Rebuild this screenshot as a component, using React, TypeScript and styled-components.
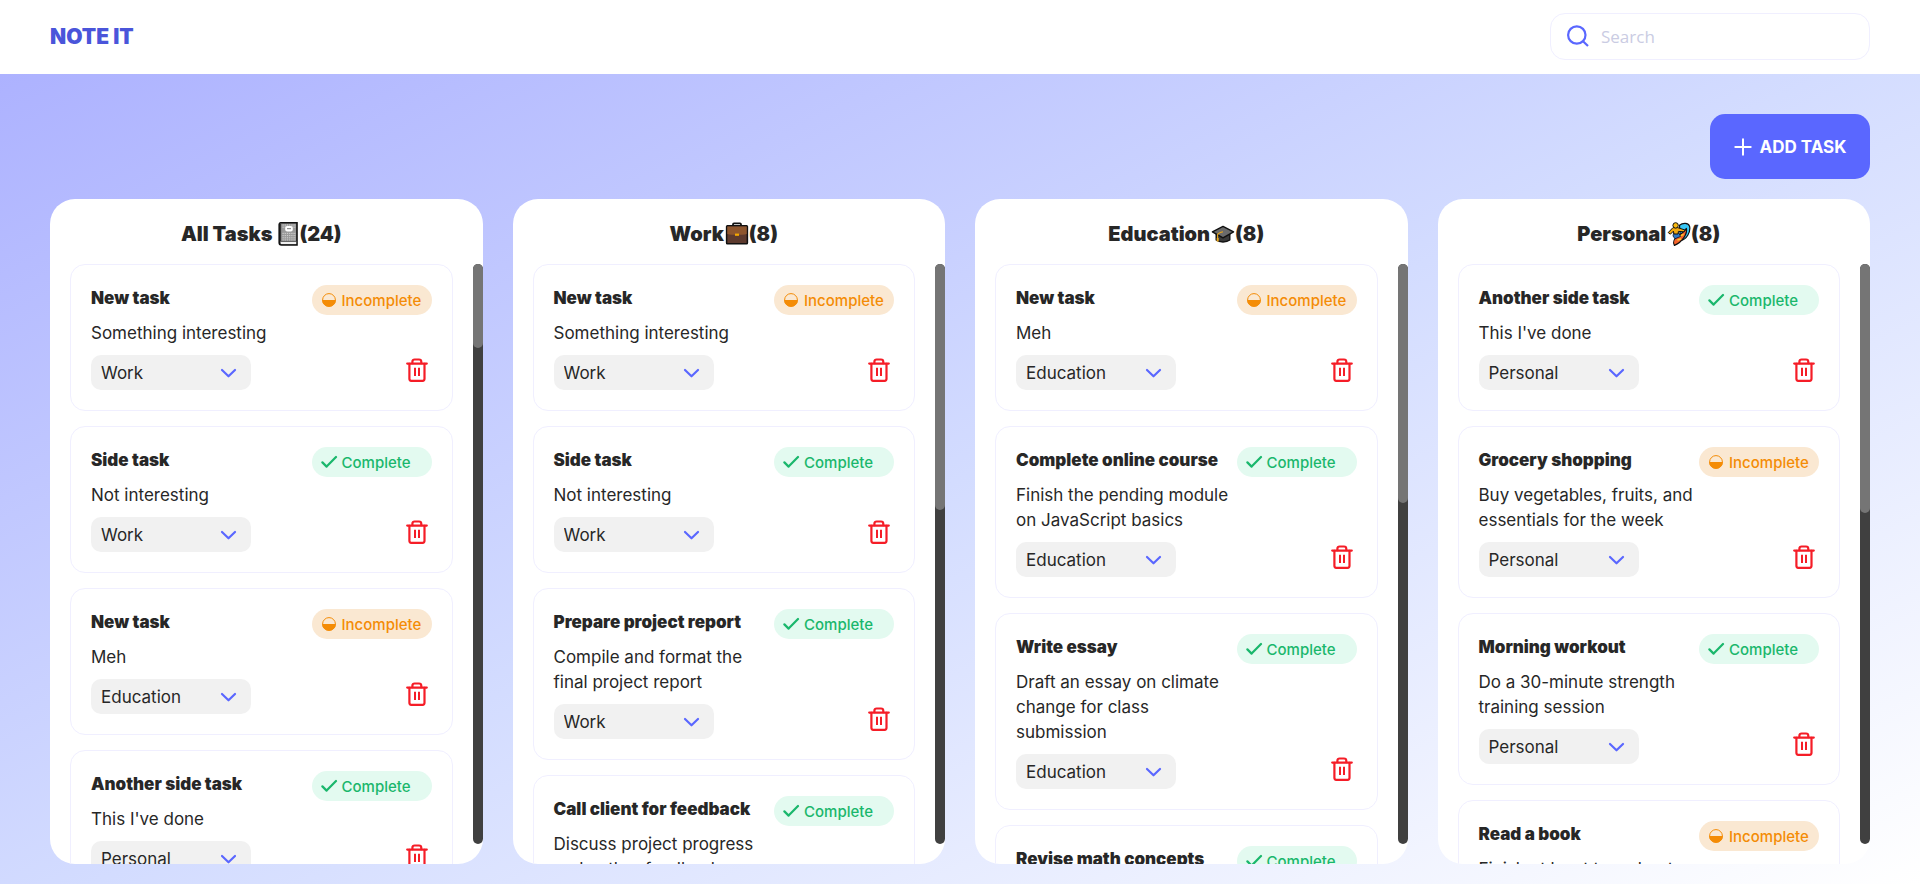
import React, { useState } from "react";
import styled, { createGlobalStyle } from "styled-components";

type Category = "Work" | "Education" | "Personal";

interface Task {
  title: string;
  text: string;
  category: Category;
  done: boolean;
}

interface Board {
  name: string;
  count: number;
  spaced?: boolean;
  icon: React.ReactNode;
  thumb: number;
  tasks: Task[];
}

const GlobalStyle = createGlobalStyle`
  *, *::before, *::after { box-sizing: border-box; }
  body {
    margin: 0;
    font-family: Inter, "Open Sans", sans-serif;
    color: #272727;
  }
`;

const Page = styled.div`
  display: flex;
  flex-direction: column;
  height: 100vh;
`;

const Header = styled.header`
  display: flex;
  align-items: center;
  justify-content: space-between;
  padding: 13px 50px 14px;
  background: #fff;
`;

const Logo = styled.a`
  font-size: 21px;
  line-height: 24px;
  font-weight: 900;
  color: #4a55da;
  text-decoration: none;
`;

const SearchBox = styled.label`
  display: flex;
  align-items: center;
  gap: 11px;
  width: 320px;
  height: 47px;
  padding: 0 15px;
  border: 1px solid #f0efff;
  border-radius: 15px;
`;

const SearchInput = styled.input`
  flex: 1;
  min-width: 0;
  border: 0;
  outline: 0;
  padding: 0;
  background: transparent;
  font-family: "Open Sans", sans-serif;
  font-size: 17px;
  font-weight: 400;
  color: #272727;
  &::placeholder {
    color: #cacce3;
    opacity: 1;
  }
`;

const Main = styled.main`
  flex: 1;
  min-height: 0;
  display: flex;
  flex-direction: column;
  gap: 20px;
  padding: 40px 50px 20px;
  background: linear-gradient(155deg, #adb2ff 0%, #d3dcff 50%, #ffffff 100%);
`;

const AddButton = styled.button`
  align-self: flex-end;
  display: flex;
  align-items: center;
  justify-content: center;
  gap: 6px;
  width: 160px;
  height: 65px;
  flex: none;
  border: 0;
  border-radius: 15px;
  background: #5a67ff;
  color: #fff;
  font-family: inherit;
  font-size: 17px;
  font-weight: 700;
  cursor: pointer;
`;

const Boards = styled.div`
  flex: 1;
  min-height: 0;
  display: grid;
  grid-template-columns: repeat(4, minmax(0, 1fr));
  grid-template-rows: minmax(0, 1fr);
  gap: 30px;
`;

const Column = styled.section`
  display: flex;
  flex-direction: column;
  border-radius: 25px;
  background: #fff;
  overflow: hidden;
`;

const ColumnTitle = styled.h2`
  display: flex;
  align-items: center;
  justify-content: center;
  height: 65px;
  flex: none;
  margin: 0;
  padding: 5px 10px 0 0;
  font-size: 20px;
  font-weight: 900;
  white-space: pre;
`;

const ScrollRow = styled.div`
  flex: 1;
  min-height: 0;
  display: flex;
`;

const CardList = styled.ul`
  flex: 1;
  min-width: 0;
  display: flex;
  flex-direction: column;
  gap: 15px;
  margin: 0;
  padding: 0 20px;
  list-style: none;
  overflow-y: auto;
  scrollbar-width: none;
`;

const ScrollTrack = styled.div`
  flex: none;
  width: 10px;
  margin-bottom: 20px;
  border-radius: 5px;
  background: #404040;
`;

const ScrollThumb = styled.div<{ $share: number }>`
  height: ${(p) => p.$share}%;
  border-radius: 5px;
  background: #757575;
`;

const Card = styled.li`
  flex: none;
  display: flex;
  flex-direction: column;
  gap: 9px;
  padding: 20px;
  border: 1px solid #f0efff;
  border-radius: 15px;
`;

const CardTop = styled.div`
  display: flex;
  align-items: flex-start;
  justify-content: space-between;
`;

const CardText = styled.div`
  flex: 1;
  min-width: 0;
  display: flex;
  flex-direction: column;
  gap: 10px;
  padding-top: 1px;
`;

const CardTitle = styled.h3`
  margin: 0;
  font-size: 17px;
  line-height: 25px;
  font-weight: 900;
`;

const CardBody = styled.p`
  margin: 0;
  font-size: 17px;
  line-height: 25px;
  font-weight: 400;
`;

const Badge = styled.button<{ $done: boolean }>`
  flex: none;
  display: flex;
  align-items: center;
  gap: 4px;
  width: 120px;
  height: 30px;
  padding: 0 0 0 9px;
  border: 0;
  border-radius: 15px;
  background: ${(p) => (p.$done ? "#e3faf0" : "#fae8d2")};
  color: ${(p) => (p.$done ? "#1ab76c" : "#f48c06")};
  font-family: inherit;
  font-size: 15px;
  font-weight: 500;
  cursor: pointer;
`;

const CardFoot = styled.div`
  display: flex;
  align-items: flex-start;
  justify-content: space-between;
`;

const Picker = styled.div`
  display: grid;
  grid-template-areas: "field";
  align-items: center;
  width: 160px;
  svg {
    grid-area: field;
    justify-self: end;
    margin-right: 13px;
    pointer-events: none;
  }
`;

const Select = styled.select`
  grid-area: field;
  appearance: none;
  width: 100%;
  height: 35px;
  padding: 0 10px;
  border: 0;
  border-radius: 10px;
  background: #f1f1f1;
  color: #272727;
  font-family: inherit;
  font-size: 17px;
  font-weight: 400;
`;

const DeleteButton = styled.button`
  display: flex;
  align-items: center;
  justify-content: center;
  width: 30px;
  height: 30px;
  padding: 0;
  border: 0;
  background: transparent;
  cursor: pointer;
`;

const SearchIcon = () => (
  <svg width="24" height="24" viewBox="0 0 24 24" fill="none" stroke="#5a67ff" strokeWidth="2.2" aria-hidden="true">
    <circle cx="10.8" cy="10" r="8.7" />
    <path d="M17 16.2 L22 21" />
  </svg>
);

const PlusIcon = () => (
  <svg width="20" height="20" viewBox="0 0 20 20" fill="none" stroke="#fff" strokeWidth="2" strokeLinecap="round" aria-hidden="true">
    <path d="M9 2.3v15.4M1.3 10h15.4" />
  </svg>
);

const HalfIcon = () => (
  <svg width="17" height="16" viewBox="0 0 17 16" aria-hidden="true">
    <circle cx="8" cy="8" r="6.4" fill="none" stroke="#f48c06" strokeWidth="1" />
    <path d="M1.2 8 H14.8 A6.8 6.8 0 0 1 1.2 8Z" fill="#f48c06" />
  </svg>
);

const CheckIcon = () => (
  <svg width="17" height="16" viewBox="0 0 17 16" fill="none" stroke="#1ab76c" strokeWidth="2.2" strokeLinecap="round" strokeLinejoin="round" aria-hidden="true">
    <path d="M1.4 8.4 L5.6 12.6 L15 3" />
  </svg>
);

const ChevronIcon = () => (
  <svg width="18" height="12" viewBox="0 0 18 12" fill="none" stroke="#5a67ff" strokeWidth="2.2" strokeLinecap="round" strokeLinejoin="round" aria-hidden="true">
    <path d="M2 3 L8.5 9.3 L15 3" />
  </svg>
);

const TrashIcon = () => (
  <svg width="30" height="30" viewBox="0 0 30 30" fill="none" stroke="#f51d27" strokeWidth="2.2" strokeLinecap="round" strokeLinejoin="round" aria-hidden="true">
    <path d="M5.2 8.6 H24.8" />
    <path d="M10.4 8.2 V6.8 C10.4 5.4 11.3 4.5 12.6 4.5 H17 C18.4 4.5 19.3 5.4 19.3 6.8 V8.2" />
    <path d="M7.4 8.8 V23.8 C7.4 25 8.1 25.8 9.2 25.8 H20.6 C21.8 25.8 22.5 25 22.5 23.8 V8.8" />
    <path d="M13 12.8 V21 M17 12.8 V21" strokeLinecap="butt" strokeWidth="2" />
  </svg>
);

const NotebookIcon = () => (
  <svg width="23" height="26" viewBox="1 0 23 26" aria-hidden="true">
    <path d="M5.5 1.8 H22 V24 H6.5 C4.8 24 4.2 23 4.2 21.5 V3.5 C4.2 2.4 4.6 1.8 5.5 1.8Z" fill="#8a8a8a" stroke="#111" strokeWidth="1.6" />
    <path d="M5.4 2.6 V20.4" stroke="#333" strokeWidth="1.2" />
    <path d="M7.2 3.2 H21 V19.8 H7.2Z" fill="#9a9a9a" />
    <path d="M7.5 4 H21 M7.5 6.2 H21 M7.5 12.4 H21 M7.5 14.6 H21 M7.5 16.8 H21 M7.5 19 H21" stroke="#d4d4d4" strokeWidth="1" strokeDasharray="1.2 1" />
    <rect x="10.2" y="5" width="7.6" height="5.4" rx="2" fill="#fff" />
    <path d="M12 7.7 H16" stroke="#777" strokeWidth="1" />
    <path d="M6 20.6 H21.2 V23 H6Z" fill="#f0f0f0" />
    <path d="M5.6 20.4 H21.4" stroke="#444" strokeWidth="0.8" />
  </svg>
);

const BriefcaseIcon = () => (
  <svg width="25" height="26" viewBox="0 0 25 26" aria-hidden="true">
    <path d="M9 5 V3.4 C9 2.7 9.4 2.4 10 2.4 H16 C16.6 2.4 17 2.7 17 3.4 V5" fill="none" stroke="#111" strokeWidth="1.8" />
    <rect x="2.6" y="4.8" width="20.8" height="18" rx="0.8" fill="#5d3a2e" stroke="#111" strokeWidth="1.5" />
    <path d="M3.3 5.5 H22.7 V13 C18 14.2 8 14.2 3.3 13Z" fill="#8e562e" />
    <rect x="11" y="12.6" width="4" height="2.2" fill="#f6a800" />
  </svg>
);

const CapIcon = () => (
  <svg width="25" height="26" viewBox="0 0 25 26" aria-hidden="true">
    <path d="M6.2 11 V19 C9.6 21.6 16.4 21.6 19.8 19 V11Z" fill="#3a3a3a" stroke="#111" strokeWidth="1.4" strokeLinejoin="round" />
    <path d="M13 5.4 L23.6 10.8 L13 16.8 L2.4 10.8Z" fill="#6b6b6b" stroke="#111" strokeWidth="1.4" strokeLinejoin="round" />
    <path d="M13 10.8 C10.6 11.2 8.4 12.2 7.6 13.6 V19.6" fill="none" stroke="#e9a51a" strokeWidth="1.1" />
    <path d="M6.7 17 H8.7 V20.6 H6.7Z" fill="#e9a51a" />
  </svg>
);

const SurferIcon = () => (
  <svg width="25" height="26" viewBox="0 0 25 26" aria-hidden="true">
    <path d="M13.5 4.2 C16.5 1.8 22.5 1.4 23.6 5.4 C24.8 11 20.6 18.6 14.6 19.4Z" fill="#38c6f4" stroke="#111" strokeWidth="1.2" />
    <path d="M20.4 7.4 C21.6 12.4 17 20.6 8.4 24.4 C6.4 21.2 8.4 17.4 12 15 C15 13 18.2 11 20.4 7.4Z" fill="#f4622a" stroke="#111" strokeWidth="1.2" strokeLinejoin="round" />
    <path d="M17.6 13.4 L13.4 15.2 M15.2 18 L11.4 19" stroke="#ffc928" strokeWidth="1.5" />
    <path d="M7.6 11.6 H12.6 L14.6 15.4 L9 17.8 L7 15Z" fill="#2e78c8" stroke="#111" strokeWidth="0.8" />
    <path d="M7 6.6 H11.6 L19 9 L18.2 10.8 L12.4 10.4 L12 13 H8 L7.4 10.2 L4.4 13.2 L2.2 11.6Z" fill="#f2a90e" stroke="#111" strokeWidth="1" strokeLinejoin="round" />
    <circle cx="9.6" cy="4.4" r="2.7" fill="#f7b90f" stroke="#111" strokeWidth="1" />
  </svg>
);

const newTask: Task = { title: "New task", text: "Something interesting", category: "Work", done: false };
const sideTask: Task = { title: "Side task", text: "Not interesting", category: "Work", done: true };
const mehTask: Task = { title: "New task", text: "Meh", category: "Education", done: false };
const doneTask: Task = { title: "Another side task", text: "This I've done", category: "Personal", done: true };

const boards: Board[] = [
  {
    name: "All Tasks",
    count: 24,
    spaced: true,
    icon: <NotebookIcon />,
    thumb: 14.5,
    tasks: [newTask, sideTask, mehTask, doneTask],
  },
  {
    name: "Work",
    count: 8,
    icon: <BriefcaseIcon />,
    thumb: 42.4,
    tasks: [
      newTask,
      sideTask,
      { title: "Prepare project report", text: "Compile and format the final project report", category: "Work", done: true },
      { title: "Call client for feedback", text: "Discuss project progress and gather feedback", category: "Work", done: true },
    ],
  },
  {
    name: "Education",
    count: 8,
    icon: <CapIcon />,
    thumb: 41.2,
    tasks: [
      mehTask,
      { title: "Complete online course", text: "Finish the pending module on JavaScript basics", category: "Education", done: true },
      { title: "Write essay", text: "Draft an essay on climate change for class submission", category: "Education", done: true },
      { title: "Revise math concepts", text: "Go over calculus and algebra", category: "Education", done: true },
    ],
  },
  {
    name: "Personal",
    count: 8,
    icon: <SurferIcon />,
    thumb: 43,
    tasks: [
      doneTask,
      { title: "Grocery shopping", text: "Buy vegetables, fruits, and essentials for the week", category: "Personal", done: false },
      { title: "Morning workout", text: "Do a 30-minute strength training session", category: "Personal", done: true },
      { title: "Read a book", text: "Finish at least two chapters", category: "Personal", done: false },
    ],
  },
];

const TaskCard = ({ task }: { task: Task }) => {
  const [done, setDone] = useState(task.done);
  return (
    <Card>
      <CardTop>
        <CardText>
          <CardTitle>{task.title}</CardTitle>
          <CardBody>{task.text}</CardBody>
        </CardText>
        <Badge type="button" $done={done} onClick={() => setDone(!done)}>
          {done ? <CheckIcon /> : <HalfIcon />}
          {done ? "Complete" : "Incomplete"}
        </Badge>
      </CardTop>
      <CardFoot>
        <Picker>
          <Select aria-label={`Category of ${task.title}`} defaultValue={task.category}>
            <option>Work</option>
            <option>Education</option>
            <option>Personal</option>
          </Select>
          <ChevronIcon />
        </Picker>
        <DeleteButton type="button" aria-label={`Delete ${task.title}`}>
          <TrashIcon />
        </DeleteButton>
      </CardFoot>
    </Card>
  );
};

export default function App() {
  return (
    <Page>
      <GlobalStyle />
      <Header>
        <Logo href="#">NOTE IT</Logo>
        <SearchBox>
          <SearchIcon />
          <SearchInput type="search" placeholder="Search" aria-label="Search" />
        </SearchBox>
      </Header>
      <Main>
        <AddButton type="button">
          <PlusIcon />
          ADD TASK
        </AddButton>
        <Boards>
          {boards.map((board) => (
            <Column key={board.name}>
              <ColumnTitle>
                <span>{board.spaced ? `${board.name} ` : board.name}</span>
                {board.icon}
                <span>({board.count})</span>
              </ColumnTitle>
              <ScrollRow>
                <CardList>
                  {board.tasks.map((task) => (
                    <TaskCard key={task.title + task.text} task={task} />
                  ))}
                </CardList>
                <ScrollTrack>
                  <ScrollThumb $share={board.thumb} />
                </ScrollTrack>
              </ScrollRow>
            </Column>
          ))}
        </Boards>
      </Main>
    </Page>
  );
}
